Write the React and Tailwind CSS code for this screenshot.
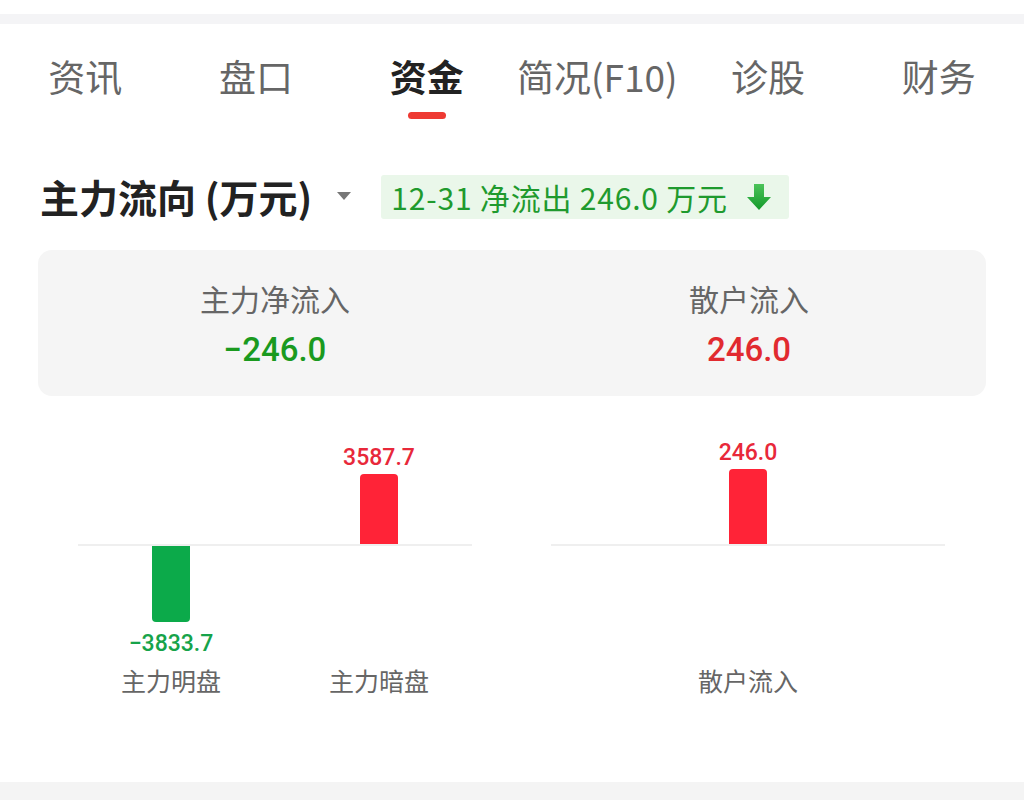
import React from "react";

const tabs = ["资讯", "盘口", "资金", "简况(F10)", "诊股", "财务"];

const mainBars = [
  { name: "主力明盘", value: -3833.7, height: 76 },
  { name: "主力暗盘", value: 3587.7, height: 70 },
];

const retailBars = [{ name: "散户流入", value: 246.0, height: 75 }];

const DownArrow = () => (
  <svg width="26" height="28" viewBox="0 0 26 28">
    <defs>
      <linearGradient id="arrowG" x1="0" y1="0" x2="0" y2="1">
        <stop offset="0" stopColor="#4cc35a" />
        <stop offset="1" stopColor="#139a2a" />
      </linearGradient>
    </defs>
    <path d="M8 1h10v13h7L13 27 1 14h7z" fill="url(#arrowG)" />
  </svg>
);

const Caret = () => (
  <svg width="16" height="10" viewBox="0 0 16 10">
    <path d="M1 1h14L8 9z" fill="#777" />
  </svg>
);

const formatValue = (v) => (v < 0 ? "−" + Math.abs(v).toFixed(1) : v.toFixed(1));

const BarChart = ({ bars }) => {
  const cols = bars.length === 2 ? "grid-cols-2" : "grid-cols-1";
  return (
    <div className="w-[416px] flex flex-col">
      {/* positive side */}
      <div className={`grid ${cols} h-[148px] items-end`}>
        {bars.map((b) => (
          <div key={b.name} className="flex flex-col items-center">
            {b.value > 0 && (
              <>
                <span className="text-[23px] leading-[28px] font-medium text-[#e8283a] font-['Roboto',sans-serif] mb-[2px]">
                  {formatValue(b.value)}
                </span>
                <div
                  className="w-[38px] bg-[#ff2337] rounded-t-[4px]"
                  style={{ height: b.height }}
                />
              </>
            )}
          </div>
        ))}
      </div>
      <div className="h-[2px] bg-[#efefef] mx-[11px]" />
      {/* negative side */}
      <div className={`grid ${cols} h-[117px] items-start`}>
        {bars.map((b) => (
          <div key={b.name} className="flex flex-col items-center">
            {b.value < 0 && (
              <>
                <div
                  className="w-[38px] bg-[#0caa4a] rounded-b-[4px]"
                  style={{ height: b.height }}
                />
                <span className="mt-[8px] text-[23px] leading-[28px] font-medium text-[#16a34a] font-['Roboto',sans-serif]">
                  {formatValue(b.value)}
                </span>
              </>
            )}
          </div>
        ))}
      </div>
      <div className={`grid ${cols}`}>
        {bars.map((b) => (
          <div
            key={b.name}
            className="text-center text-[25px] leading-[34px] text-[#666]"
          >
            {b.name}
          </div>
        ))}
      </div>
    </div>
  );
};

export default function App() {
  const active = "资金";

  return (
    <div className="w-[1024px] h-[800px] bg-white flex flex-col overflow-hidden font-['Noto_Sans_CJK_SC','Noto_Sans',sans-serif]">
      <div className="h-[14px] bg-white" />
      <div className="h-[10px] bg-[#f4f4f6]" />

      {/* Tabs */}
      <div className="grid grid-cols-6 pt-[26px]">
        {tabs.map((t) => (
          <div key={t} className="flex flex-col items-center">
            <span
              className={`text-[37px] leading-[52px] ${
                t === active ? "text-[#222] font-bold" : "text-[#666]"
              }`}
            >
              {t}
            </span>
            <div
              className={`mt-[10px] h-[7px] w-[38px] rounded-full ${
                t === active ? "bg-[#ee3a33]" : "bg-transparent"
              }`}
            />
          </div>
        ))}
      </div>

      {/* Title */}
      <div className="flex items-center px-[40px] mt-[53px]">
        <span className="text-[39px] leading-[48px] font-semibold text-[#222]">
          主力流向 (万元)
        </span>
        <span className="ml-[24px] mr-[29px] flex items-center">
          <Caret />
        </span>
        <div className="mt-[2px] h-[44px] w-[408px] flex items-center pl-[10px] bg-[#eaf7ea] rounded-[3px] text-[30px] tracking-[0.8px] text-[#1f9a2e]">
          <span className="leading-[44px]">12-31 净流出 246.0 万元</span>
          <span className="ml-[18px] flex items-center">
            <DownArrow />
          </span>
        </div>
      </div>

      {/* Summary card */}
      <div className="mx-[38px] mt-[30px] h-[146px] rounded-[14px] bg-[#f5f5f5] grid grid-cols-2">
        <div className="flex flex-col items-center pt-[28px]">
          <span className="text-[30px] leading-[40px] text-[#666]">主力净流入</span>
          <span className="mt-[12px] text-[33px] leading-[40px] font-medium text-[#1a9a1f] font-['Roboto',sans-serif]">
            −246.0
          </span>
        </div>
        <div className="flex flex-col items-center pt-[28px]">
          <span className="text-[30px] leading-[40px] text-[#666]">散户流入</span>
          <span className="mt-[12px] text-[33px] leading-[40px] font-medium text-[#e12a2f] font-['Roboto',sans-serif]">
            246.0
          </span>
        </div>
      </div>

      {/* Charts */}
      <div className="flex pl-[67px] gap-[57px]">
        <BarChart bars={mainBars} />
        <BarChart bars={retailBars} />
      </div>

      <div className="flex-1" />
      <div className="h-[18px] bg-[#f4f4f4] shrink-0" />
    </div>
  );
}
